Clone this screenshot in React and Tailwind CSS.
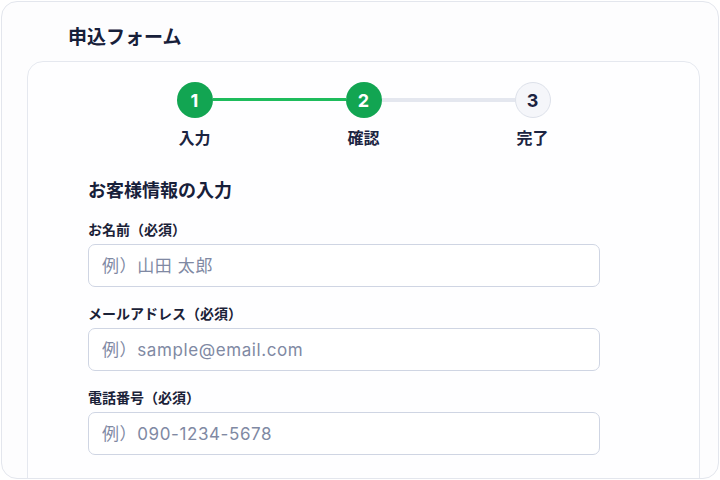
import React from 'react'

const steps = [
  { no: 1, label: '入力', state: 'done' },
  { no: 2, label: '確認', state: 'current' },
  { no: 3, label: '完了', state: 'todo' },
]

const fields = [
  { label: 'お名前（必須）', placeholder: '例）山田 太郎', type: 'text' },
  { label: 'メールアドレス（必須）', placeholder: '例）sample@email.com', type: 'email' },
  { label: '電話番号（必須）', placeholder: '例）090-1234-5678', type: 'tel' },
]

function StepCircle({ step }) {
  const active = step.state !== 'todo'
  return (
    <div className="flex w-[36px] flex-col items-center">
      <div
        className={
          active
            ? 'flex h-[36px] w-[36px] items-center justify-center rounded-full bg-[#12a552] text-[18px] font-bold text-white'
            : 'flex h-[36px] w-[36px] items-center justify-center rounded-full border border-[#dde1ea] bg-[#f5f6fa] text-[18px] font-bold text-[#1b2441]'
        }
      >
        {step.no}
      </div>
      <div className="mt-[10px] whitespace-nowrap text-[16px] font-bold leading-[20px] text-[#1b2441]">
        {step.label}
      </div>
    </div>
  )
}

function Stepper() {
  return (
    <div className="flex justify-center">
      {steps.map((step, i) => (
        <React.Fragment key={step.no}>
          {i > 0 && (
            <div
              className={
                step.state === 'todo'
                  ? 'mt-[16px] h-[4px] w-[133px] bg-[#e4e7ef]'
                  : 'mt-[16px] h-[3px] w-[133px] bg-[#1ebc5c]'
              }
            />
          )}
          <StepCircle step={step} />
        </React.Fragment>
      ))}
    </div>
  )
}

function Field({ field }) {
  return (
    <div className="mt-[18px]">
      <label className="block text-[14px] font-bold leading-[18px] text-[#1b2238]">{field.label}</label>
      <input
        type={field.type}
        placeholder={field.placeholder}
        className="mt-[5px] block h-[43px] w-[512px] rounded-[7px] border border-[#cfd5e3] bg-white px-[13px] text-[17px] tracking-[0.6px] text-[#1b2238] outline-none placeholder:text-[#8089a3]"
      />
    </div>
  )
}

export default function App() {
  return (
    <div
      className="h-[480px] w-[720px] bg-white p-px"
      style={{ fontFamily: 'Inter, "Noto Sans CJK JP", sans-serif' }}
    >
      <div className="h-full overflow-hidden rounded-[16px] border border-[#e3e6ed] bg-[#fdfdfe] pl-[25px] pr-[18px]">
        <h1 className="pl-[41px] pt-[24px] text-[19px] font-bold leading-[24px] text-[#17203a]">申込フォーム</h1>
        <div className="mt-[11px] rounded-[16px] border border-[#e5e8ef] bg-[#fefeff] px-[60px] pb-[40px] pt-[20px]">
          <Stepper />
          <h2 className="mt-[31px] text-[18px] font-bold leading-[24px] text-[#17203a]">お客様情報の入力</h2>
          {fields.map((f) => (
            <Field key={f.label} field={f} />
          ))}
        </div>
      </div>
    </div>
  )
}
